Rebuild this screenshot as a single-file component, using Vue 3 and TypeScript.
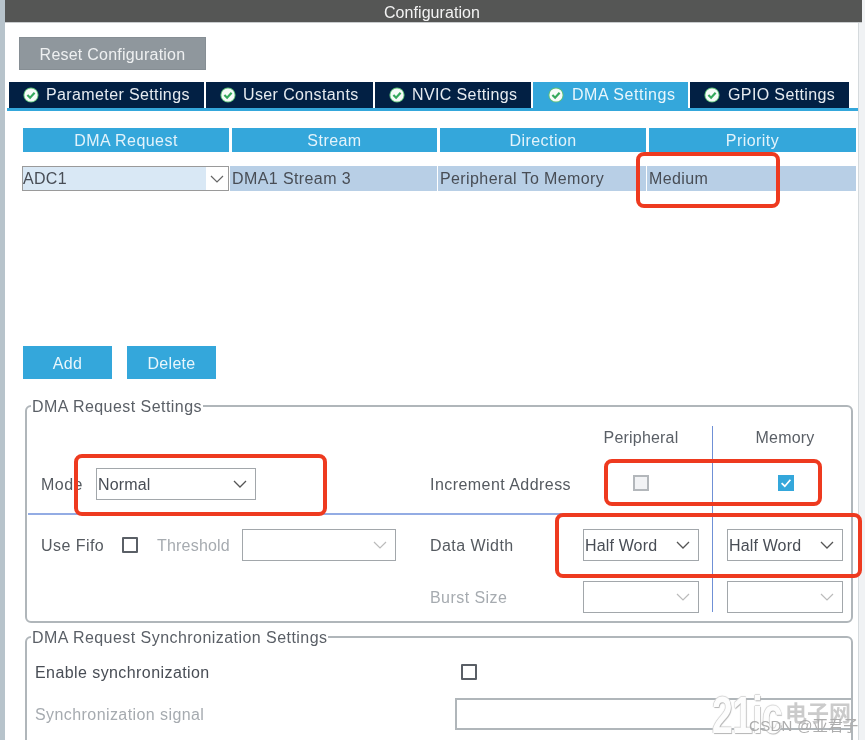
<script setup lang="ts">
interface Tab { label: string; active?: boolean; width: number }
const tabs: Tab[] = [
  { label: 'Parameter Settings', width: 195 },
  { label: 'User Constants', width: 167 },
  { label: 'NVIC Settings', width: 156 },
  { label: 'DMA Settings', width: 155, active: true },
  { label: 'GPIO Settings', width: 159 }
]
const heads: string[] = ['DMA Request', 'Stream', 'Direction', 'Priority']
</script>

<template>
  <div class="page">
    <div class="strip"></div>
    <main class="main">
      <header class="title">Configuration</header>
      <button class="reset">Reset Configuration</button>

      <nav class="tabs">
        <div v-for="t in tabs" :key="t.label" class="tab" :class="{ active: t.active }" :style="{ width: t.width + 'px' }">
          <svg class="ok" width="16" height="16" viewBox="0 0 16 16">
            <circle cx="8" cy="8" r="7.6" fill="#5cbf78" />
            <circle cx="8" cy="8" r="6.6" fill="#f7fbf8" />
            <path d="M4.4 8 7.1 10.7 11.6 5.7" fill="none" stroke="#35a95c" stroke-width="2.2" />
          </svg>
          <span>{{ t.label }}</span>
        </div>
      </nav>

      <section class="table">
        <div v-for="h in heads" :key="h" class="th">{{ h }}</div>
        <div class="cell sel-cell">
          <span class="sel-val">ADC1</span>
          <span class="sel-arrow">
            <svg width="14" height="8" viewBox="0 0 14 8"><path d="M1 1 7 7 13 1" fill="none" stroke="#666" stroke-width="1.2" /></svg>
          </span>
        </div>
        <div class="cell">DMA1 Stream 3</div>
        <div class="cell">Peripheral To Memory</div>
        <div class="cell">Medium</div>
      </section>

      <div class="actions">
        <button class="act">Add</button>
        <button class="act">Delete</button>
      </div>

      <fieldset class="group first">
        <legend>DMA Request Settings</legend>
        <div class="vline"></div>
        <div class="hline"></div>

        <div class="row head">
          <div class="left"></div>
          <div class="rlabel"></div>
          <div class="col">Peripheral</div>
          <div class="col mem">Memory</div>
        </div>

        <div class="row inc">
          <div class="left">
            <span class="mode-label">Mode</span>
            <div class="select mode"><span>Normal</span>
              <svg width="14" height="8" viewBox="0 0 14 8"><path d="M1 1 7 7 13 1" fill="none" stroke="#555" stroke-width="1.3" /></svg>
            </div>
          </div>
          <div class="rlabel">Increment Address</div>
          <div class="col"><span class="check off"></span></div>
          <div class="col">
            <span class="check on">
              <svg width="16" height="16" viewBox="0 0 16 16"><path d="M3.6 8.2 6.8 11.2 12.4 4.8" fill="none" stroke="#fff" stroke-width="1.7" /></svg>
            </span>
          </div>
        </div>

        <div class="row data">
          <div class="left">
            <span class="fifo-label">Use Fifo</span>
            <span class="check plain"></span>
            <span class="thr-label muted">Threshold</span>
            <div class="select thr">
              <span></span>
              <svg width="14" height="8" viewBox="0 0 14 8"><path d="M1 1 7 7 13 1" fill="none" stroke="#bbb" stroke-width="1.2" /></svg>
            </div>
          </div>
          <div class="rlabel">Data Width</div>
          <div class="col">
            <div class="select"><span>Half Word</span>
              <svg width="14" height="8" viewBox="0 0 14 8"><path d="M1 1 7 7 13 1" fill="none" stroke="#555" stroke-width="1.3" /></svg>
            </div>
          </div>
          <div class="col">
            <div class="select"><span>Half Word</span>
              <svg width="14" height="8" viewBox="0 0 14 8"><path d="M1 1 7 7 13 1" fill="none" stroke="#555" stroke-width="1.3" /></svg>
            </div>
          </div>
        </div>

        <div class="row burst">
          <div class="left"></div>
          <div class="rlabel muted">Burst Size</div>
          <div class="col">
            <div class="select"><span></span>
              <svg width="14" height="8" viewBox="0 0 14 8"><path d="M1 1 7 7 13 1" fill="none" stroke="#bbb" stroke-width="1.2" /></svg>
            </div>
          </div>
          <div class="col">
            <div class="select"><span></span>
              <svg width="14" height="8" viewBox="0 0 14 8"><path d="M1 1 7 7 13 1" fill="none" stroke="#bbb" stroke-width="1.2" /></svg>
            </div>
          </div>
        </div>
      </fieldset>

      <fieldset class="group second">
        <legend>DMA Request Synchronization Settings</legend>
        <div class="sync-row enable">
          <span class="sync-label">Enable synchronization</span>
          <span class="check plain"></span>
        </div>
        <div class="sync-row signal">
          <span class="sync-label muted">Synchronization signal</span>
          <div class="sync-input"></div>
        </div>
      </fieldset>
    </main>
    <div class="strip-right"></div>

    <div class="mark m1"></div>
    <div class="mark m2"></div>
    <div class="mark m3"></div>
    <div class="mark m4"></div>

    <div class="wm">
      <span class="wm-big">21ic</span>
      <span class="wm-cn">电子网</span>
      <span class="wm-csdn">CSDN @亚君子</span>
    </div>
  </div>
</template>

<style>
html, body { margin: 0; background: #fff; }
</style>

<style scoped>
.page {
  position: relative;
  display: flex;
  width: 865px;
  height: 740px;
  overflow: hidden;
  background: #fff;
  font-family: "Liberation Sans", Arial, sans-serif;
  font-size: 16px;
  letter-spacing: 0.45px;
  color: #555a60;
  filter: blur(0.5px);
}
.strip { width: 5px; flex: none; background: #b7c3cb; }
.strip-right { width: 7px; flex: none; background: #f0f2f4; border-left: 1px solid #d5dadd; box-sizing: border-box; }
.main { width: 853px; flex: none; }
.title {
  position: relative;
  height: 22px;
  line-height: 25px;
  margin-right: -4px;
  padding-right: 3px;
  background: #555655;
  border-bottom: 1px solid #c9ccce;
  text-align: center;
  color: #f3f3f3;
  letter-spacing: 0.07px;
}
.reset {
  display: block;
  width: 187px;
  height: 33px;
  margin: 14px 0 0 14px;
  padding: 2px 0 0;
  background: #8f979d;
  border: 1px solid #868e94;
  color: #eef0f1;
  font: inherit;
  letter-spacing: 0.23px;
}
.tabs {
  display: flex;
  gap: 2px;
  height: 26px;
  margin: 12px 0 0 2px;
  padding-left: 2px;
  border-bottom: 3px solid #34a7db;
  width: 852px;
  box-sizing: content-box;
}
.tab {
  display: flex;
  align-items: center;
  gap: 7px;
  padding-left: 14px;
  box-sizing: border-box;
  background: #022044;
  color: #e6ebf0;
  letter-spacing: 0.38px;
}
.tab.active { background: #34a7db; color: #e8f6fc; padding-left: 15px; gap: 8px; letter-spacing: 0.55px; }
.tab:nth-child(5) { gap: 8px; }
.ok { flex: none; }
.table {
  display: grid;
  grid-template-columns: 206px 205px 206px 207px;
  column-gap: 3px;
  margin: 17px 0 0 18px;
  width: 833px;
}
.th {
  height: 24px;
  line-height: 26px;
  background: #34a7db;
  color: #e3f3fb;
  text-align: center;
}
.cell {
  height: 25px;
  line-height: 25px;
  margin-top: 14px;
  background: #b8cfe6;
  color: #484d55;
  letter-spacing: 0.4px;
  margin-left: -2px;
  padding-left: 2px;
  white-space: nowrap;
}
.sel-cell {
  display: flex;
  margin-left: -1px;
  padding-left: 0;
  border: 1px solid #9a9a9a;
  height: 23px;
  line-height: 23px;
  background: #d9e8f5;
  letter-spacing: 0.3px;
}
.sel-val { flex: 1; }
.sel-arrow {
  display: flex;
  width: 22px;
  align-items: center;
  justify-content: center;
  background: #fff;
}
.actions { display: flex; gap: 15px; margin: 155px 0 0 18px; }
.act {
  width: 89px;
  height: 33px;
  padding: 2px 0 0;
  border: none;
  background: #34a7db;
  color: #e8f6fc;
  font: inherit;
  letter-spacing: 0.3px;
}
.group {
  position: relative;
  margin: 0;
  padding: 0;
  border: 2px solid #b0b6ba;
  border-radius: 6px;
  width: 828px;
  box-sizing: border-box;
  min-inline-size: 0;
  margin-left: 20px;
}
.group legend {
  margin-left: 4px;
  padding: 0 1px;
  line-height: 22px;
  height: 20px;
  color: #5a5f66;
}
.first { margin-top: 17px; height: 227px; }
.second { margin-top: 4px; height: 180px; }
.row { display: flex; align-items: center; height: 32px; }
.left { display: flex; align-items: center; width: 403px; flex: none; height: 100%; }
.rlabel { width: 153px; flex: none; padding-top: 2px; box-sizing: border-box; }
.mode-label, .fifo-label, .thr-label { padding-top: 2px; }
.col { width: 116px; flex: none; display: flex; justify-content: center; align-items: center; }
.col + .col { margin-left: 28px; }
.head { height: 24px; margin-top: 10px; color: #5a5f66; }
.head .col { letter-spacing: 0.2px; }
.inc { margin-top: 18px; }
.data { margin-top: 29px; }
.burst { margin-top: 20px; }
.muted { color: #a6abb0; }
.mode-label { width: 69px; padding-left: 14px; box-sizing: border-box; flex: none; }
.select {
  display: flex;
  align-items: center;
  justify-content: space-between;
  width: 100%;
  height: 32px;
  box-sizing: border-box;
  padding: 2px 8px 0 1px;
  border: 1px solid #a2a7ab;
  background: #fff;
  color: #484d55;
  letter-spacing: 0.15px;
}
.select svg { margin-top: -2px; }
.select.mode { width: 160px; flex: none; }
.select.thr { width: 154px; flex: none; margin-left: 13px; }
.fifo-label { width: 95px; padding-left: 14px; box-sizing: border-box; flex: none; }
.thr-label { margin-left: 19px; width: 72px; white-space: nowrap; flex: none; letter-spacing: 0.2px; }
.check {
  display: inline-block;
  width: 16px;
  height: 16px;
  box-sizing: border-box;
  flex: none;
}
.check.plain { border: 2px solid #5a5f66; border-radius: 1px; background: #fff; }
.check.off { border: 2px solid #b3b7bb; background: #f2f3f5; margin-right: 1px; margin-top: -2px; }
.check.on { background: #34a7db; margin-right: -2px; margin-top: -2px; }
.check.on svg { display: block; }
.vline {
  position: absolute;
  left: 685px;
  top: 10px;
  width: 1px;
  height: 186px;
  background: #6f90d6;
}
.hline {
  position: absolute;
  left: 1px;
  top: 97px;
  width: 684px;
  height: 2px;
  background: #93ace4;
}
.sync-row { display: flex; align-items: center; padding-left: 8px; }
.sync-label { width: 420px; flex: none; color: #484d55; letter-spacing: 0.42px; padding-top: 2px; }
.sync-label.muted { color: #a6abb0; }
.enable { height: 16px; margin-top: 17px; }
.enable .check { margin-left: 6px; }
.signal { height: 32px; margin-top: 18px; }
.sync-input {
  flex: 1;
  height: 32px;
  box-sizing: border-box;
  border: 2px solid #b0b6ba;
  border-right: none;
}
.mark {
  position: absolute;
  box-sizing: border-box;
  border: 4px solid #ee3a1f;
  border-radius: 8px;
}
.m1 { left: 636px; top: 152px; width: 144px; height: 56px; }
.m2 { left: 74px; top: 454px; width: 253px; height: 62px; }
.m3 { left: 604px; top: 459px; width: 218px; height: 47px; }
.m4 { left: 555px; top: 513px; width: 307px; height: 65px; }
.wm { position: absolute; left: 712px; top: 692px; width: 150px; height: 48px; }
.wm-big {
  position: absolute;
  left: 0;
  top: 0;
  font: bold 52px/46px "Liberation Sans", sans-serif;
  letter-spacing: -1px;
  color: #fdfdfd;
  text-shadow: 1px 1px 1px #b5b5b5, -1px 0 1px #cfcfcf, 0 -1px 1px #d8d8d8;
  transform: scaleX(0.72);
  transform-origin: left top;
}
.wm-cn {
  position: absolute;
  left: 73px;
  top: 7px;
  font: bold 22px/24px "Noto Sans CJK SC", sans-serif;
  color: #cbcbcb;
  letter-spacing: 0;
}
.wm-csdn {
  position: absolute;
  left: 37px;
  top: 24px;
  font: 15px/20px "Liberation Sans", "Noto Sans CJK SC", sans-serif;
  letter-spacing: 0.3px;
  color: #adadad;
  white-space: nowrap;
}
</style>
